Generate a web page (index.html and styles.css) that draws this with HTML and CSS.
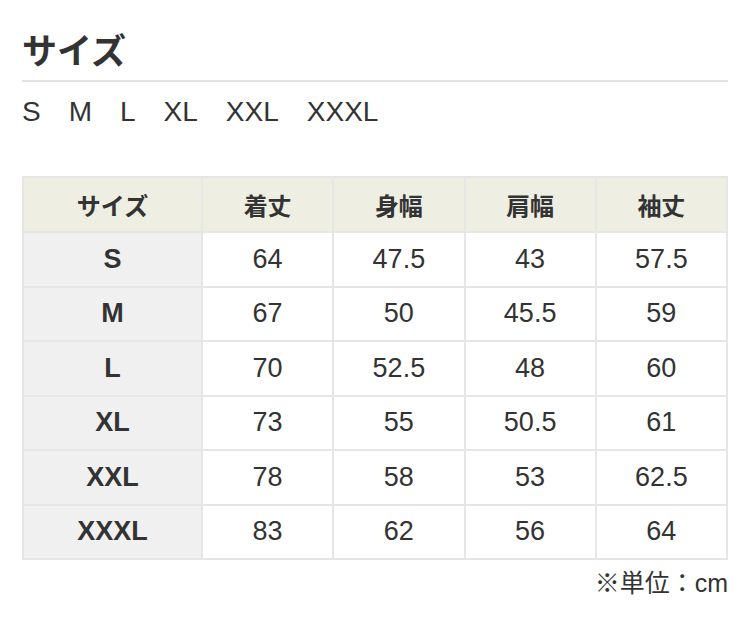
FILE: index.html
```html
<!DOCTYPE html>
<html lang="ja">
<head>
<meta charset="utf-8">
<link rel="stylesheet" href="styles.css">
</head>
<body>
<div class="page">
  <h2 class="title">サイズ</h2>
  <div class="sizes">
    <span>S</span><span>M</span><span>L</span><span>XL</span><span>XXL</span><span>XXXL</span>
  </div>
  <table class="chart">
    <thead>
      <tr><th class="c1">サイズ</th><th>着丈</th><th>身幅</th><th>肩幅</th><th>袖丈</th></tr>
    </thead>
    <tbody>
      <tr><th>S</th><td>64</td><td>47.5</td><td>43</td><td>57.5</td></tr>
      <tr><th>M</th><td>67</td><td>50</td><td>45.5</td><td>59</td></tr>
      <tr><th>L</th><td>70</td><td>52.5</td><td>48</td><td>60</td></tr>
      <tr><th>XL</th><td>73</td><td>55</td><td>50.5</td><td>61</td></tr>
      <tr><th>XXL</th><td>78</td><td>58</td><td>53</td><td>62.5</td></tr>
      <tr><th>XXXL</th><td>83</td><td>62</td><td>56</td><td>64</td></tr>
    </tbody>
  </table>
  <p class="note">※単位：cm</p>
</div>
</body>
</html>
```
FILE: styles.css
```css
html, body {
  margin: 0;
  padding: 0;
  background: #fff;
}
body {
  font-family: "Liberation Sans", "Noto Sans CJK JP", sans-serif;
  color: #333;
}
.page {
  width: 706px;
  padding: 24px 0 0 22px;
}
.title {
  margin: 0;
  font-family: "Noto Sans CJK JP", sans-serif;
  font-size: 35px;
  font-weight: bold;
  line-height: 50px;
  padding-bottom: 6px;
  border-bottom: 2px solid #e2e2e2;
  color: #333;
}
.sizes {
  display: flex;
  gap: 28px;
  font-size: 28px;
  line-height: 30px;
  margin-top: 15px;
  color: #333;
}
.chart {
  margin-top: 49px;
  width: 706px;
  border-collapse: collapse;
  table-layout: fixed;
  font-size: 27px;
}
.chart th, .chart td {
  border: 2px solid #e6e6e6;
  text-align: center;
  height: 52.5px;
  padding: 0;
  color: #333;
}
.chart thead th {
  background: #eeeee2;
  font-family: "Noto Sans CJK JP", sans-serif;
  font-size: 24px;
  font-weight: bold;
  height: 53px;
}
.chart .c1 {
  width: 177px;
}
.chart tbody th {
  background: #f0f0f0;
  font-weight: bold;
}
.chart td {
  background: #fff;
  font-weight: normal;
}
.note {
  margin: 8px 0 0;
  text-align: right;
  font-size: 25px;
  line-height: 30px;
  font-family: "Liberation Sans", "Noto Sans CJK JP", sans-serif;
}
```
